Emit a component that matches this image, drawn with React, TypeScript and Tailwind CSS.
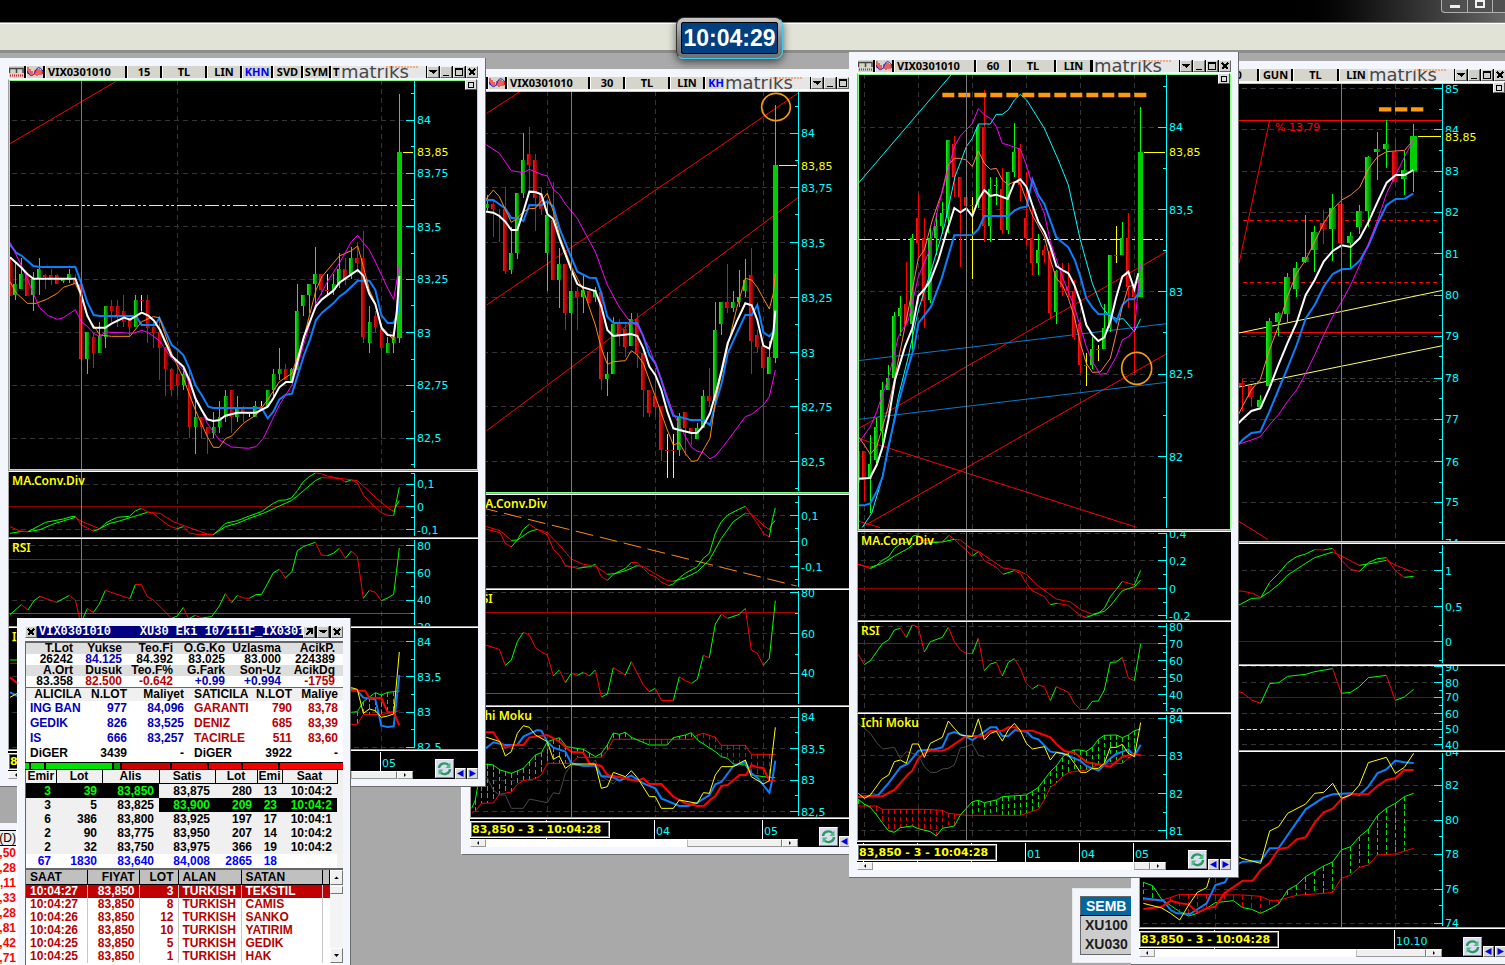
import type { ReactNode } from "react";

type Pt = [number, number];

interface CloudData {
  a: string;
  b: string;
  step: number;
  from: number;
  to: number;
}

interface PaneData {
  h: number;
  // page position of the plot origin, plot units are thirds of a pixel
  at: Pt;
  title?: string;
  labels: [string, number][];
  price?: number;
  priceFrom?: number;
  guides?: [number, string, string?][];
  segments?: [string, string, string?][];
  candles?: string;
  candleWidth?: number;
  trends?: string[];
  cloud?: CloudData;
  lines?: [string, string, number][];
  extra?: ReactNode;
}

interface ChartData {
  left: number;
  top: number;
  axis: number;
  cursor: number;
  vlines: number[];
  panes: PaneData[];
}

const GREEN = "#00ff00";
const RED = "#ff0000";
const BLUE = "#0a80ff";
const ORANGE = "#ff8a10";
const MAGENTA = "#ff00ff";
const CYAN = "#00ffff";
const YELLOW = "#ffff00";

const parse = (s: string): Pt[] =>
  s
    .trim()
    .split(/\s+/)
    .map((p) => p.split(",").map(Number) as Pt);

const yAt = (pts: Pt[], x: number) => {
  for (let i = 1; i < pts.length; i++) {
    const [x0, y0] = pts[i - 1];
    const [x1, y1] = pts[i];
    if (x >= x0 && x <= x1) return y0 + ((y1 - y0) * (x - x0)) / (x1 - x0 || 1);
  }
  return pts[pts.length - 1][1];
};

function Trend({ points }: { points: string }) {
  const pts = parse(points);
  return (
    <>
      {pts.slice(1).map(([x, y], i) => {
        const [px, py] = pts[i];
        return (
          <path
            key={i}
            d={`M${px} ${py}L${x} ${y}`}
            stroke={y < py ? GREEN : RED}
            strokeWidth={3}
          />
        );
      })}
    </>
  );
}

function Cloud({ a, b, step, from, to }: CloudData) {
  const pa = parse(a);
  const pb = parse(b);
  const bars = [];
  for (let x = from; x <= to; x += step) {
    const ya = yAt(pa, x);
    const yb = yAt(pb, x);
    bars.push(
      <path
        key={x}
        d={`M${x} ${Math.min(ya, yb)}V${Math.max(ya, yb)}`}
        stroke={ya < yb ? "#00dd00" : "#e00000"}
        strokeWidth={3}
        strokeDasharray="14 8"
      />
    );
  }
  return (
    <>
      <g shapeRendering="crispEdges">{bars}</g>
      <polyline points={b} stroke={RED} strokeWidth={3} />
      <polyline points={a} stroke={GREEN} strokeWidth={3} />
    </>
  );
}

function Candles({ data, width }: { data: string; width: number }) {
  return (
    <g shapeRendering="crispEdges">
      {data
        .trim()
        .split(/\s+/)
        .map((row, i) => {
          const [xs, hs, ts, bs, ls, kind] = row.split(",");
          const [x, hi, top, bottom, lo] = [xs, hs, ts, bs, ls].map(Number);
          const wick = kind === "y" ? YELLOW : kind === "r" ? RED : GREEN;
          const fill =
            kind === "G" ? "#00d000" : kind === "g" ? "url(#up)" : "url(#down)";
          const w = kind === "G" ? width + 2 : width;
          return (
            <g key={i}>
              <rect x={x - 1} y={hi} width={3} height={Math.max(lo - hi, 3)} fill={wick} />
              <rect
                x={x - w / 2}
                y={top}
                width={w}
                height={Math.max(bottom - top, 3)}
                fill={fill}
              />
            </g>
          );
        })}
    </g>
  );
}

function Pane({
  chart,
  pane,
  y,
  main,
}: {
  chart: ChartData;
  pane: PaneData;
  y: number;
  main: boolean;
}) {
  const { left } = chart;
  const [ox, oy] = pane.at;
  // panes of one chart may be measured from different origins
  const dx = (chart.panes[0].at[0] - ox) * 3;
  const axis = chart.axis + dx;
  const cursor = chart.cursor + dx;
  const ys = pane.labels.map((l) => l[1]);
  const step = ys[1] - ys[0];
  const minor = [ys[0] - step / 2, ...ys.map((v) => v + step / 2)];
  const labelX = ox + Math.floor(axis / 3) + 3;
  const py = (v: number) => Math.round(oy + v / 3) + 4;
  const x0 = (left - ox) * 3;
  const y0 = (y - oy) * 3;
  return (
    <div className="border-t border-b border-l border-t-white border-b-[#a0a0a0] border-l-[#a0a0a0] bg-black">
      <svg
        className="block w-full"
        height={pane.h}
        viewBox={`${left} ${y} 640 ${pane.h}`}
        preserveAspectRatio="xMinYMin slice"
      >
        <g transform={`translate(${ox} ${oy}) scale(0.333333)`} fill="none">
          <g stroke="#343434" strokeWidth={3} strokeDasharray="15 12" shapeRendering="crispEdges">
            {ys.map((v) => (
              <path key={v} d={`M${x0 + 9} ${v}H${axis - 28}`} />
            ))}
            {chart.vlines.map((v) => (
              <path key={v} d={`M${v + dx} ${y0}V${y0 + pane.h * 3}`} />
            ))}
          </g>
          {pane.guides?.map(([v, color, dash], i) => (
            <path
              key={i}
              d={`M${x0} ${v}H${axis}`}
              stroke={color}
              strokeWidth={3}
              strokeDasharray={dash}
              shapeRendering="crispEdges"
            />
          ))}
          {pane.segments?.map(([points, color, dash], i) => (
            <polyline
              key={i}
              points={points}
              stroke={color}
              strokeWidth={3}
              strokeDasharray={dash}
            />
          ))}
          {pane.candles && <Candles data={pane.candles} width={pane.candleWidth ?? 12} />}
          {pane.cloud && <Cloud {...pane.cloud} />}
          {pane.trends?.map((t, i) => <Trend key={i} points={t} />)}
          {pane.lines?.map(([points, color, w], i) => (
            <polyline key={i} points={points} stroke={color} strokeWidth={w} />
          ))}
          {pane.extra}
          <g stroke={CYAN} strokeWidth={3} shapeRendering="crispEdges">
            <path d={`M${axis} ${y0 + 3}V${y0 + pane.h * 3 - 3}`} />
            {ys.map((v) => (
              <path key={v} d={`M${axis - 25} ${v}H${axis}`} />
            ))}
            {minor.map((v) => (
              <path key={v} d={`M${axis - 10} ${v}H${axis}`} />
            ))}
          </g>
          <path
            d={`M${cursor} ${y0}V${y0 + pane.h * 3}`}
            stroke="#7c7c7c"
            strokeWidth={3}
            shapeRendering="crispEdges"
          />
          {pane.price && (
            <path
              d={`M${pane.priceFrom} ${pane.price}H${axis - 4}`}
              stroke={YELLOW}
              strokeWidth={3}
              shapeRendering="crispEdges"
            />
          )}
        </g>
        <g fontFamily="DejaVu Sans, sans-serif" fontSize={11} fill={CYAN}>
          {pane.labels.map(([text, v]) => (
            <text key={text} x={labelX} y={py(v)}>
              {text}
            </text>
          ))}
          {pane.price && (
            <>
              <rect x={labelX - 1} y={py(pane.price) - 9} width={34} height={11} fill="#000" />
              <text x={labelX} y={py(pane.price)} fill={YELLOW}>
                83,85
              </text>
            </>
          )}
        </g>
        {pane.title && (
          <text
            x={left + 3}
            y={y + 13}
            fontFamily="Noto Sans, sans-serif"
            fontSize={12}
            fontWeight={600}
            fill={YELLOW}
          >
            {pane.title}
          </text>
        )}
      </svg>
      {main && <div className="h-px bg-[#80ff80]" />}
    </div>
  );
}

function Tool({ className, children }: { className: string; children: ReactNode }) {
  return (
    <button
      type="button"
      className={`h-3 shrink-0 overflow-hidden border-l border-r-2 border-l-white border-r-black bg-[#d6d5cb] text-[11px] leading-3 font-bold whitespace-nowrap ${className}`}
    >
      {children}
    </button>
  );
}

function CaptionButton({ label, d }: { label: string; d: string }) {
  return (
    <button
      type="button"
      aria-label={label}
      className="h-3 w-3 shrink-0 border border-t-[#f0f0f0] border-r-[#666] border-b-[#666] border-l-[#f0f0f0] bg-[#cfcfca]"
    >
      <svg viewBox="0 0 10 10" className="block h-full w-full" shapeRendering="crispEdges">
        <path d={d} stroke="#000" strokeWidth="1.6" fill="none" />
      </svg>
    </button>
  );
}

function Toolbar({ tools }: { tools: ReactNode }) {
  return (
    <div className="flex h-3 bg-black font-['Noto_Sans',sans-serif] text-black">
      <div className="flex min-w-0 flex-1 overflow-hidden">
        <Tool className="w-[18px]">
          <svg viewBox="0 0 15 12" className="block h-3 w-[15px]">
            <path d="M0.500 7V2.500H14V7M7.500 2.500V7" stroke="#444" strokeWidth="1.500" fill="none" />
            <path d="M1 9.500H14" stroke="#e02020" strokeWidth="2" strokeDasharray="1 1" />
          </svg>
        </Tool>
        <Tool className="w-[19px]">
          <svg viewBox="0 0 16 12" className="block h-3 w-4">
            <path
              d="M1 1V8M3 3V9M5 5V9M8 4V9M10 3V10M12 3V9M14 4V9M15.500 5V8"
              stroke="#f01818"
              strokeWidth="1.200"
            />
            <path d="M0 5C3 11 6 11 8 6S12 0 16 5" stroke="#1818d0" fill="none" />
          </svg>
        </Tool>
        {tools}
      </div>
      <div className="relative h-3 w-[86px] shrink-0 overflow-hidden bg-[#e6e6e6] pl-px font-['DejaVu_Sans',sans-serif] text-[18px] leading-[11px] text-[#484848]">
        matriks
        <svg viewBox="0 0 32 2" className="absolute top-0 right-2 h-[2px] w-8">
          <path d="M0 1H32" stroke="#ff7020" strokeWidth="1" strokeDasharray="2 1" />
        </svg>
      </div>
      <div className="flex gap-px bg-black pl-px">
        <CaptionButton label="Menu" d="M1 3.500H9M2 4.500H8M3.500 5.500H6.500M4.500 6.500H5.500" />
        <CaptionButton label="Minimize" d="M2 8.500H8" />
        <CaptionButton label="Maximize" d="M1.500 1.500H8.500V8.500H1.500ZM1.500 2.500H8.500" />
        <CaptionButton label="Close" d="M2 2L8 8M8 2L2 8" />
      </div>
    </div>
  );
}

function Footer({
  chart,
  dates,
  thumb,
}: {
  chart: ChartData;
  dates: [string, number][];
  thumb: string;
}) {
  const ox = chart.panes[0].at[0];
  const width = ox + Math.round(chart.axis / 3) - chart.left;
  return (
    <div className="flex h-[29px] border-t border-white bg-black">
      <div className="relative flex shrink-0 flex-col">
        <svg className="block" width={width} height={20} viewBox={`${chart.left} 0 ${width} 20`}>
          {dates.map(([text, x]) => {
            const px = ox + Math.floor(x / 3);
            return (
              <g key={x}>
                <path d={`M${px + 0.5} 1V20`} stroke="#fff" />
                <text x={px + 2} y={16} fontFamily="DejaVu Sans, sans-serif" fontSize={11} fill={CYAN}>
                  {text}
                </text>
              </g>
            );
          })}
        </svg>
        <div className="absolute top-[2px] left-0 flex h-[17px] w-[140px] items-center border border-white bg-black font-['DejaVu_Sans',sans-serif] text-[11px] leading-3 font-bold whitespace-nowrap text-[#ffff00] outline -outline-offset-2 outline-[#777]">
          <span className="pt-px pl-px">83,850 - 3 - 10:04:28</span>
        </div>
        <div className="flex h-2 bg-white">
          <button
            type="button"
            aria-label="Scroll left"
            className="w-4 border border-r-[#999] border-b-[#999] border-t-white border-l-white bg-[#f0f0f0]"
          >
            <svg viewBox="0 0 14 6" className="block h-full w-full">
              <path d="M8 1V5L6 3Z" />
            </svg>
          </button>
          <div className="flex-1" />
          <div className={`border border-t-white border-r-[#777] border-b-[#999] border-l-[#bbb] bg-[#f0f0f0] ${thumb}`} />
          <button
            type="button"
            aria-label="Scroll right"
            className="w-4 border border-r-[#999] border-b-[#999] border-t-white border-l-white bg-[#f0f0f0]"
          >
            <svg viewBox="0 0 14 6" className="block h-full w-full">
              <path d="M6 1V5L8 3Z" />
            </svg>
          </button>
        </div>
      </div>
      <div className="flex flex-1 items-end justify-end gap-px">
        <button
          type="button"
          aria-label="Refresh"
          className="mb-px h-[19px] w-[19px] border border-t-white border-r-[#888] border-b-[#888] border-l-white bg-[#dcdcf4]"
        >
          <svg viewBox="0 0 17 17" className="block h-full w-full" fill="none">
            <path d="M3 8A5.500 5 0 0 1 12.500 5" stroke="#2c9a5c" strokeWidth="2.400" />
            <path d="M14 9A5.500 5 0 0 1 4.500 12.500" stroke="#2c9a5c" strokeWidth="2.400" />
            <path d="M14.500 2.500V8H9.500Z" fill="#48c078" />
            <path d="M2.500 15V9.500H7.500Z" fill="#48c078" />
          </svg>
        </button>
        <button type="button" aria-label="Previous" className="h-[11px] w-[11px] border border-t-white border-r-[#777] border-b-[#777] border-l-white bg-[#d8d8d8]">
          <svg viewBox="0 0 9 9" className="block h-full w-full">
            <path d="M7.500 1V8L1 4.500Z" fill="#0000e0" />
          </svg>
        </button>
        <button type="button" aria-label="Next" className="h-[11px] w-[11px] border border-t-white border-r-[#777] border-b-[#777] border-l-white bg-[#d8d8d8]">
          <svg viewBox="0 0 9 9" className="block h-full w-full">
            <path d="M1.500 1V8L8 4.500Z" fill="#0000e0" />
          </svg>
        </button>
      </div>
    </div>
  );
}

function ChartWindow({
  className,
  chart,
  tools,
  dates,
  thumb,
}: {
  className: string;
  chart: ChartData;
  tools: ReactNode;
  dates: [string, number][];
  thumb: string;
}) {
  let y = chart.top;
  return (
    <section
      className={`absolute border-r border-b border-[#6c6c6c] bg-[#f3f6fc] p-2 pr-[7px] pb-[7px] ${className}`}
    >
      <Toolbar tools={tools} />
      <div className="relative mt-px">
        {chart.panes.map((pane, i) => {
          const top = y;
          y += pane.h + 2;
          const main = i === 0;
          return (
            <div key={i} className={main ? "relative" : undefined}>
              <Pane
                chart={chart}
                pane={main ? { ...pane, h: pane.h - 1 } : pane}
                y={top}
                main={main}
              />
              {main && (
                <div className="pointer-events-none absolute top-px right-0 bottom-px left-px border border-[#80ff80]" />
              )}
            </div>
          );
        })}
        <button
          type="button"
          aria-label="Expand pane"
          className="absolute top-0 right-px flex h-[11px] w-3 items-center justify-center border border-t-white border-r-[#555] border-b-[#555] border-l-white bg-[#dcdcdc]"
        >
          <span className="h-[6px] w-[6px] border border-black" />
        </button>
      </div>
      <Footer chart={chart} dates={dates} thumb={thumb} />
    </section>
  );
}

const chart15: ChartData = {
  left: 9,
  top: 80,
  axis: 1243,
  cursor: 244,
  vlines: [532, 1144],
  panes: [
    {
      h: 390,
      at: [0, 50],
      labels: [
        ["84", 211], ["83,75", 370], ["83,5", 530], ["83,25", 688],
        ["83", 848], ["82,75", 1006], ["82,5", 1165],
      ],
      price: 307,
      priceFrom: 1210,
      guides: [[466, YELLOW, "42 8 9 8 9 8"]],
      segments: [["30,281 350,93", RED]],
      candles: `32,620,640,737,737,r 46,640,703,735,750,g 64,625,672,718,718,g 82,668,672,737,737,r
        100,665,688,735,782,g 118,625,657,688,735,g 136,672,674,680,718,r 154,657,674,686,705,r
        172,672,674,703,703,r 190,686,688,692,700,g 208,657,672,683,700,g 226,672,690,703,703,r
        244,690,703,927,955,r 262,846,846,927,971,g 281,848,860,910,955,r 299,815,857,908,908,g
        317,768,768,860,893,g 335,750,768,783,815,r 353,750,768,798,830,r 371,735,783,815,830,r
        389,805,810,830,857,r 407,735,750,830,830,g 425,735,750,753,783,y 443,735,750,833,878,r
        461,815,830,848,893,r 479,800,846,895,990,r 497,890,895,958,1038,r 515,955,958,1021,1038,r
        533,905,972,1006,1038,r 551,955,972,1006,1020,g 569,958,985,1131,1163,r 587,1050,1101,1131,1212,g
        605,1100,1101,1131,1163,r 623,1131,1131,1152,1212,r 641,1087,1131,1148,1163,g 659,1053,1101,1131,1148,g
        677,1020,1038,1101,1116,g 695,1020,1020,1101,1148,r 712,1038,1070,1101,1116,g 730,1068,1070,1085,1116,r
        748,1085,1090,1093,1101,y 766,1053,1068,1100,1100,g 785,1053,1068,1071,1080,y 803,1020,1020,1068,1068,g
        821,958,972,1020,1038,g 839,894,958,972,990,g 857,942,958,990,990,r 875,955,958,995,995,g
        892,702,783,960,960,g 910,735,735,768,797,g 928,702,702,735,790,g 946,591,672,702,765,g
        964,672,672,720,735,r 982,672,720,723,735,y 1001,672,702,720,735,g 1018,610,657,702,715,g
        1036,625,657,688,705,r 1054,590,625,672,688,g 1072,575,625,640,670,r 1090,543,625,862,880,r
        1109,768,815,878,908,g 1127,783,797,832,845,r 1145,830,838,895,1163,r 1163,862,878,908,908,g
        1181,848,862,878,908,g 1199,132,307,863,880,G`,
      lines: [
        ["30,583 48,608 66,618 100,648 120,651 226,651 244,700 262,757 281,795 300,798 408,798 425,825 466,825 478,803 497,845 515,885 532,898 550,915 568,955 586,1005 605,1035 625,1070 640,1074 785,1074 803,1105 820,1085 838,1048 858,1034 876,1031 912,915 930,868 948,810 966,788 1000,760 1018,740 1035,728 1073,692 1108,692 1126,720 1144,795 1163,819 1181,819 1193,790 1198,740", BLUE, 6],
        ["30,695 48,728 82,760 108,760 140,748 172,730 190,712 226,700 244,740 262,800 300,855 335,859 390,859 425,815 460,800 478,803 515,910 550,985 586,1080 622,1160 640,1192 658,1192 676,1166 695,1158 730,1120 768,1095 803,1050 838,995 876,970 912,860 948,720 966,680 1018,618 1054,602 1073,588 1090,650 1108,720 1126,760 1145,830 1163,850 1181,870 1198,690", ORANGE, 3],
        ["30,577 66,650 100,730 118,772 145,797 172,808 190,803 226,779 244,815 262,829 281,850 300,860 316,846 400,850 425,841 445,848 478,872 515,925 550,960 586,1040 622,1120 658,1170 695,1191 745,1195 768,1190 790,1165 838,1065 876,1005 912,880 948,760 985,690 1018,640 1054,575 1073,556 1090,578 1108,600 1126,635 1163,715 1181,748 1198,645", MAGENTA, 3],
        ["30,622 50,640 66,655 82,672 100,686 226,686 244,735 262,797 281,833 316,833 336,820 372,803 390,809 425,788 445,797 462,812 480,840 500,885 515,918 550,950 568,990 586,1045 605,1080 622,1108 640,1113 658,1110 676,1097 712,1088 768,1088 803,1070 820,1045 838,1012 858,996 876,996 912,860 948,768 966,748 1000,722 1018,698 1054,673 1073,660 1090,677 1108,732 1126,763 1145,835 1163,855 1181,857 1190,790 1198,678", "#fff", 6],
      ],
    },
    {
      h: 65,
      at: [0, 460],
      title: "MA.Conv.Div",
      labels: [["0,1", 73], ["0", 140], ["-0,1", 209]],
      guides: [[140, "#900000"]],
      trends: [
        "30,220 66,214 84,215 118,197 136,187 190,177 214,170 226,169 244,195 280,213 298,208 316,190 334,180 352,172 388,169 406,153 424,145 442,155 460,160 478,175 496,190 514,200 532,206 550,200 568,219 590,223 640,224 658,208 676,190 712,182 748,168 784,155 820,130 838,121 856,120 874,114 892,92 910,65 928,50 946,39 964,41 982,48 1018,55 1036,66 1054,60 1072,68 1090,105 1108,125 1126,142 1144,158 1163,166 1181,167 1190,120 1198,82",
        "30,200 60,213 84,215 120,209 160,192 226,172 244,184 262,191 298,206 330,190 352,185 400,170 442,157 480,160 520,185 560,200 622,222 640,223 676,200 712,190 748,175 790,160 838,138 874,122 892,108 946,62 964,53 1000,54 1036,57 1072,62 1090,78 1126,112 1163,143 1181,154 1190,135 1198,122",
      ],
    },
    {
      h: 87,
      at: [0, 460],
      title: "RSI",
      labels: [["80", 257], ["60", 338], ["40", 421], ["20", 502]],
      guides: [[298, "#b00000"], [460, "#009000"]],
      trends: [
        "30,464 64,434 84,450 102,422 120,409 170,427 208,406 226,420 240,480 247,480 262,445 280,458 298,432 316,391 390,416 406,373 424,374 442,410 460,420 515,475 532,468 550,442 566,476 586,466 605,474 635,470 658,438 676,401 695,428 712,406 730,414 748,415 768,404 785,403 803,370 820,338 838,328 856,354 876,335 892,272 912,259 946,247 964,285 982,287 1000,280 1018,265 1036,295 1054,273 1072,290 1090,415 1108,391 1126,397 1144,422 1163,414 1181,403 1198,264",
      ],
    },
    {
      h: 121,
      at: [0, 460],
      title: "Ichi Moku",
      labels: [["84", 545], ["83,5", 650], ["83", 757], ["82,5", 862]],
      cloud: {
        a: "30,600 52,600 1054,757 1072,755 1090,725 1126,698 1144,705 1163,697 1198,693",
        b: "30,610 52,610 1054,793 1072,793 1090,763 1145,764 1181,757 1198,752",
        step: 18,
        from: 1072,
        to: 1185,
      },
      lines: [
        ["30,697 52,708 1054,688 1072,692 1090,713 1126,718 1144,797 1163,801 1181,799 1198,645", BLUE, 6],
        ["30,652 52,670 1054,692 1095,692 1108,713 1144,714 1163,757 1181,757 1198,796", RED, 6],
        ["30,712 52,700 1054,683 1072,688 1090,760 1108,747 1126,752 1144,772 1163,768 1181,762 1198,576", YELLOW, 3],
      ],
    },
  ],
};

const chart30: ChartData = {
  left: 471,
  top: 91,
  axis: 1016,
  cursor: 334,
  vlines: [262, 586, 910],
  panes: [
    {
      h: 402,
      at: [460, 60],
      labels: [
        ["84", 220], ["83,75", 383], ["83,5", 548], ["83,25", 713],
        ["83", 878], ["82,75", 1040], ["82,5", 1205],
      ],
      price: 317,
      priceFrom: 957,
      segments: [
        ["80,160 178,96", RED],
        ["80,735 1016,98", RED],
        ["80,1112 1016,411", RED],
      ],
      candles: `82,405,433,445,455,g 100,418,432,447,530,r 118,448,465,468,545,r 136,382,448,632,643,r
        154,500,580,630,643,g 172,398,400,579,597,g 190,219,300,400,415,g 208,200,282,316,395,r
        226,282,300,415,512,r 244,382,403,447,465,r 262,430,465,578,693,g 280,366,480,661,661,r
        298,565,612,659,743,g 316,612,612,760,810,r 334,693,693,759,759,g 352,680,693,712,810,r
        370,645,690,712,759,g 388,690,693,728,728,r 406,680,690,710,725,g 424,693,695,957,990,r
        442,877,942,957,1008,g 460,770,792,941,941,g 478,777,792,825,857,r 496,790,808,860,890,r
        514,760,777,857,857,g 532,760,777,878,923,r 550,870,878,990,1070,r 568,990,990,1058,1070,r
        586,925,1008,1040,1070,r 604,1038,1038,1170,1203,r 622,1122,1170,1173,1253,y 640,1122,1170,1173,1253,y
        658,1058,1068,1170,1187,g 676,1056,1056,1105,1187,r 694,1104,1104,1122,1155,r 712,1090,1103,1137,1137,g
        730,990,1008,1103,1103,g 748,925,1008,1024,1040,r 766,726,810,1024,1024,g 784,726,726,792,825,g
        802,612,726,745,760,r 820,693,726,745,757,g 838,630,712,726,740,g 856,597,660,693,710,g
        874,564,645,844,941,r 892,810,825,860,877,r 910,857,859,925,1203,r 928,843,892,941,941,g
        946,135,316,893,908,G`,
      lines: [
        ["60,418 80,420 100,420 136,445 154,474 172,474 190,483 208,435 244,436 262,424 280,440 300,510 334,592 352,635 388,653 408,654 424,700 442,770 460,789 532,789 550,830 568,885 586,910 604,960 622,1020 640,1068 676,1075 690,1080 730,1080 750,1095 767,1030 785,970 803,880 830,820 856,765 875,765 892,735 910,817 928,829 940,815 946,792", BLUE, 6],
        ["60,440 80,415 100,390 118,410 154,487 172,475 190,455 208,446 226,445 262,400 280,455 300,530 334,620 370,690 406,795 424,865 442,913 460,905 496,902 514,872 532,885 550,910 586,1010 622,1110 640,1155 658,1148 676,1180 695,1204 712,1202 730,1170 750,1135 767,1020 803,860 830,745 856,655 875,660 892,682 910,715 928,747 940,700 946,640", ORANGE, 3],
        ["60,240 80,255 118,280 154,332 190,338 208,328 244,343 262,348 280,388 298,403 316,432 352,475 380,528 406,575 442,675 478,742 514,790 532,795 568,865 604,960 640,1060 676,1130 695,1162 712,1174 730,1178 750,1197 768,1186 803,1142 856,1070 875,1063 910,1035 928,1010 946,930", MAGENTA, 3],
        ["60,450 80,455 100,458 118,468 136,485 154,510 172,510 190,455 208,395 226,396 244,403 262,462 280,478 300,540 334,630 352,672 370,682 406,693 424,740 442,810 460,828 514,822 532,828 550,865 568,920 586,945 604,990 622,1055 640,1105 658,1110 695,1119 712,1118 730,1098 750,1060 770,990 785,930 803,850 830,785 856,730 875,736 892,780 910,857 928,866 940,820 946,752", "#fff", 6],
      ],
      extra: <ellipse cx={948} cy={141} rx={43} ry={41} stroke="#f59a10" strokeWidth={5} />,
    },
    {
      h: 93,
      at: [460, 480],
      title: "MA.Conv.Div",
      labels: [["0,1", 107], ["0", 185], ["-0,1", 261]],
      guides: [[184, "#900000"]],
      segments: [["60,82 1010,318", ORANGE, "54 20"]],
      trends: [
        "60,143 80,148 120,158 136,190 154,201 172,180 190,148 208,133 226,145 262,165 280,208 298,225 316,256 352,265 388,260 406,253 424,290 442,301 460,283 496,265 514,247 532,248 550,265 568,283 586,290 604,306 626,317 640,312 660,292 676,280 712,260 730,235 748,220 766,160 784,125 803,105 838,87 856,79 874,105 892,130 910,160 928,171 937,120 946,84",
        "60,136 80,140 120,152 154,181 172,180 208,155 232,148 262,158 298,195 334,237 370,253 406,258 442,283 464,281 500,271 532,256 550,260 586,282 622,302 640,304 676,293 712,275 748,240 784,175 820,125 856,100 874,102 910,136 928,149 937,130 946,122",
      ],
    },
    {
      h: 115,
      at: [460, 480],
      title: "RSI",
      labels: [["80", 338], ["60", 461], ["40", 580]],
      guides: [[397, "#b00000"], [640, "#009000"]],
      trends: [
        "60,492 80,496 118,508 136,556 154,540 172,485 190,457 208,465 226,502 244,516 262,525 280,588 298,570 316,608 334,580 352,586 370,577 388,588 406,570 424,651 442,642 460,563 496,585 514,545 550,615 568,635 586,625 604,661 640,662 658,590 676,602 695,610 712,598 730,526 748,533 766,432 784,403 803,415 838,403 856,385 874,510 892,520 910,556 928,535 946,362",
      ],
    },
    {
      h: 110,
      at: [460, 480],
      title: "Ichi Moku",
      labels: [["84", 712], ["83,5", 806], ["83", 901], ["82,5", 995]],
      cloud: {
        a: "35,985 46,960 60,880 80,852 100,855 120,870 154,880 190,865 226,825 244,818 262,785 298,773 320,800 370,808 406,830 424,820 442,795 460,759 478,763 496,757 514,772 568,795 622,795 640,773 676,765 694,758 712,780 766,815 784,830 803,835 820,852 856,855 874,885 910,890 946,893",
        b: "35,997 46,994 64,970 100,969 118,943 154,936 172,913 190,902 226,896 244,885 262,850 334,850 352,832 424,832 442,812 460,778 695,778 712,765 730,760 766,772 784,796 856,796 874,823 946,823",
        step: 18,
        from: 46,
        to: 930,
      },
      lines: [
        ["80,890 100,930 118,945 136,945 154,985 190,985 208,957 262,968 280,938 298,942 316,880 334,855 388,860 406,840 424,888 460,912 478,890", "#484848", 3],
        ["60,810 80,803 100,787 136,795 172,795 190,770 232,750 244,752 262,785 280,803 316,815 334,850 370,857 406,857 424,888 460,892 478,902 514,887 550,910 586,925 604,955 658,978 684,978 712,968 748,945 766,913 784,906 820,858 856,846 874,880 892,893 928,938 937,900 946,842", BLUE, 6],
        ["60,757 100,757 118,785 136,803 160,795 190,795 208,772 262,765 298,785 334,815 370,818 388,850 424,858 442,885 480,892 532,903 550,895 568,912 604,912 640,950 676,970 712,978 732,977 750,960 766,948 784,918 803,915 838,885 858,885 874,855 892,862 910,864 928,902 946,902", RED, 6],
        ["60,768 80,772 120,785 136,828 154,815 172,760 190,737 208,742 226,765 262,785 280,838 298,828 316,865 334,852 406,852 424,925 442,920 460,877 496,890 514,872 532,893 568,950 586,950 604,985 640,985 658,960 712,970 730,938 748,940 766,885 784,860 820,860 856,840 874,890 910,912 928,902 937,820 946,742", YELLOW, 3],
      ],
    },
  ],
};

const chart60: ChartData = {
  left: 858,
  top: 74,
  axis: 965,
  cursor: 364,
  vlines: [58, 220, 382, 544, 706, 868],
  panes: [
    {
      h: 456,
      at: [845, 50],
      labels: [["84", 232], ["83,5", 479], ["83", 725], ["82,5", 973], ["82", 1220]],
      price: 307,
      priceFrom: 897,
      guides: [[568, YELLOW, "42 8 9 8 9 8"]],
      segments: [
        ["40,400 318,75", CYAN],
        ["40,1136 965,605", RED],
        ["50,1432 965,911", RED],
        ["40,1165 875,1432", RED],
        ["40,1413 105,1433", RED],
        ["40,932 965,821", "#0a7ac8"],
        ["40,1108 965,997", "#0a7ac8"],
      ],
      candles: `40,1203,1204,1300,1300,g 58,1204,1204,1290,1352,r 76,1155,1243,1288,1388,g 94,1104,1130,1230,1240,g
        112,995,1020,1142,1200,g 130,945,984,1020,1020,g 148,785,797,985,985,g 166,738,773,797,857,g
        184,637,762,825,825,r 202,552,565,822,900,g 220,430,504,578,620,r 238,504,565,752,833,r
        256,535,565,750,760,g 274,490,528,563,615,g 292,455,490,528,552,g 310,270,270,505,550,g
        328,258,282,382,440,r 346,382,382,442,650,r 364,440,442,467,467,r 382,440,465,468,687,y
        400,224,232,460,475,g 418,120,232,528,575,r 436,380,416,528,575,g 454,380,405,408,465,g
        472,355,416,541,552,r 490,367,367,541,552,g 508,219,307,366,382,g 526,282,294,404,452,r
        544,365,504,565,585,r 562,470,565,640,675,r 580,552,600,638,675,g 598,585,600,615,640,r
        616,600,602,788,805,r 634,660,663,786,822,g 652,640,663,710,738,r 670,640,710,724,740,r
        688,690,724,862,870,r 706,815,822,946,970,r 724,910,945,948,1007,y 742,860,898,945,957,g
        760,885,897,900,932,y 778,762,835,897,897,g 796,616,616,835,845,g 814,528,614,617,640,y
        832,516,565,615,615,g 850,490,565,712,773,r 868,708,712,740,973,r 886,170,307,741,741,G`,
      lines: [
        ["52,1432 80,1390 110,1290 136,1170 160,1040 190,920 220,780 262,650 300,520 330,380 364,290 382,265 400,222 436,222 454,193 472,193 490,180 508,150 526,133 545,150 598,235 640,330 670,405 706,570 742,700 770,770 790,795 820,808 835,806 868,845 887,806", CYAN, 3],
        ["40,1366 58,1366 76,1360 95,1325 113,1280 130,1190 160,1060 190,950 208,890 220,820 258,770 290,685 328,556 382,555 400,538 418,498 490,498 508,482 526,473 545,470 562,388 580,435 598,462 616,512 634,562 670,592 690,632 706,680 724,745 742,772 760,792 796,793 814,816 832,765 850,748 868,748 887,720", BLUE, 6],
        ["40,1160 58,1185 76,1213 95,1190 113,1130 130,1070 150,980 190,780 220,625 238,600 262,510 290,430 310,345 328,325 346,325 364,330 382,350 400,303 418,340 436,358 454,355 472,390 490,404 508,395 526,400 544,450 562,495 598,560 616,630 634,685 652,705 670,745 688,800 706,880 724,940 742,967 766,966 796,925 814,850 832,770 850,710 868,705 887,688", "#ff7f50", 3],
        ["40,1180 76,1130 95,1085 130,985 160,860 190,810 220,680 250,610 280,470 328,290 346,258 382,220 400,176 418,195 436,205 454,230 472,280 490,285 526,298 544,345 562,405 598,490 616,575 652,680 688,770 706,830 724,890 742,935 766,973 785,970 814,920 832,870 850,860 868,840 887,640", MAGENTA, 3],
        ["40,1286 75,1284 95,1245 113,1190 130,1110 150,990 180,890 202,835 220,738 240,715 256,692 280,630 305,545 328,474 346,487 364,475 382,498 400,450 418,420 436,438 454,434 488,447 508,398 526,388 544,410 562,465 580,515 598,545 616,590 634,648 652,660 670,670 688,705 706,755 724,825 742,855 760,873 778,862 796,815 814,740 832,680 850,665 868,718 880,670", "#fff", 6],
      ],
      extra: (
        <>
          <path d="M292 135H906" stroke="#ff9a08" strokeWidth={13} strokeDasharray="36 12" />
          <ellipse cx={875} cy={955} rx={45} ry={48} stroke="#f59a10" strokeWidth={5} />
        </>
      ),
    },
    {
      h: 88,
      at: [845, 520],
      title: "MA.Conv.Div",
      labels: [["0,4", 41], ["0,2", 122], ["0", 207], ["-0,2", 287]],
      guides: [[205, "#900000"]],
      trends: [
        "40,133 76,146 95,136 113,120 131,110 148,85 166,72 190,65 204,48 220,45 238,70 292,66 312,46 328,58 346,75 382,108 400,95 418,122 454,142 474,163 508,152 526,160 544,190 562,212 598,230 616,254 636,250 670,256 688,272 706,286 724,292 742,286 760,280 778,265 796,230 814,208 832,184 868,195 887,151",
        "40,133 76,142 113,130 148,108 190,85 220,60 292,66 328,58 346,60 382,88 400,94 436,118 474,144 516,150 544,163 580,198 634,237 676,246 706,268 742,283 778,274 796,258 832,212 868,200 887,180",
      ],
    },
    {
      h: 90,
      at: [845, 520],
      title: "RSI",
      labels: [["80", 320], ["70", 371], ["60", 422], ["50", 473], ["40", 524], ["30", 577]],
      guides: [[371, "#b00000"]],
      trends: [
        "40,403 58,434 76,422 113,370 131,360 148,330 166,325 184,352 202,315 220,322 238,396 256,365 292,352 310,322 328,365 346,390 364,400 382,401 400,355 418,452 436,432 454,427 472,468 490,427 508,416 526,445 544,490 562,507 580,495 598,500 616,542 634,500 670,517 688,550 706,568 724,569 742,544 760,543 778,510 796,427 814,426 832,412 850,474 868,482 887,372",
      ],
    },
    {
      h: 126,
      at: [845, 520],
      title: "Ichi Moku",
      labels: [["84", 596], ["83", 707], ["82", 821], ["81", 932]],
      cloud: {
        a: "40,838 58,852 76,862 95,885 113,910 130,932 148,937 166,923 202,918 220,926 256,935 274,948 292,925 328,918 346,885 382,845 400,841 418,848 454,840 472,830 544,825 562,814 580,802 616,755 634,738 652,712 670,697 688,690 706,690 724,694 742,682 760,658 778,646 814,645 832,653 850,645 868,632 887,627",
        b: "40,858 95,858 113,868 240,868 292,871 310,880 364,886 526,886 544,880 580,868 598,840 616,802 634,790 652,770 670,758 688,755 724,750 760,733 832,730 850,715 868,700",
        step: 18,
        from: 40,
        to: 868,
      },
      lines: [
        ["40,610 76,640 95,668 113,687 148,682 166,715 184,695 220,705 238,740 256,757 274,757 292,747 310,745 328,735 346,684 364,680 382,672 400,705 418,710", "#484848", 3],
        ["40,832 100,825 130,790 166,742 190,730 220,692 270,688 292,682 310,642 328,636 364,650 382,660 400,648 436,622 454,622 472,648 490,648 510,630 545,635 562,652 580,658 616,695 652,700 688,715 706,722 724,738 760,752 778,735 796,715 814,702 850,688 868,708 887,674", BLUE, 6],
        ["40,830 113,828 148,810 190,762 202,752 220,715 244,695 256,692 292,692 310,685 364,648 418,648 436,633 472,632 490,622 510,622 526,632 562,632 598,645 616,652 634,672 658,693 688,698 706,712 724,726 742,730 796,740 832,710 868,702 887,706", RED, 6],
        ["40,820 58,835 76,825 110,778 131,765 148,725 166,720 184,730 202,672 220,672 238,712 256,670 292,652 310,603 328,625 346,645 382,650 400,597 418,660 436,640 454,634 472,663 490,630 508,610 526,632 544,670 562,687 598,680 616,720 634,697 670,705 688,730 706,757 724,757 742,745 760,745 778,730 796,682 814,682 832,673 850,700 868,710 887,608", YELLOW, 3],
      ],
    },
  ],
};

const chartDay: ChartData = {
  left: 1140,
  top: 83,
  axis: 638,
  cursor: 334,
  vlines: [-44, 497],
  panes: [
    {
      h: 459,
      at: [1230, 60],
      labels: [
        ["85", 86], ["84", 210], ["83", 334], ["82", 457], ["81", 582], ["80", 706],
        ["79", 829], ["78", 955], ["77", 1078], ["76", 1205], ["75", 1327], ["74", 1450],
      ],
      price: 230,
      priceFrom: 564,
      guides: [
        [181, RED],
        [817, RED],
        [482, RED, "12 10"],
        [667, RED, "12 10"],
        [964, RED, "12 10"],
      ],
      segments: [
        ["27,610 119,181", RED],
        ["27,1384 113,1438", RED],
        ["27,819 638,691", "#ffff70"],
        ["27,981 638,857", "#ffff70"],
      ],
      candleWidth: 19,
      candles: `37,957,970,978,1052,r 64,975,978,1010,1040,r 91,1005,1020,1041,1041,g 118,774,783,978,978,g
        145,755,760,786,828,g 172,639,652,762,788,g 199,606,625,687,711,g 227,465,592,606,610,g
        254,498,516,570,635,g 281,450,490,507,552,r 308,402,445,507,603,g 333,430,432,548,548,r
        361,516,528,549,623,g 388,435,453,501,522,g 415,288,291,453,500,g 442,216,267,276,360,g
        469,180,252,267,324,g 496,237,275,367,367,r 523,273,330,357,405,g 550,192,228,332,396,G`,
      lines: [
        ["20,1160 37,1140 64,1119 91,1115 118,1055 145,990 172,925 200,855 227,775 254,735 281,680 308,642 335,628 362,626 389,602 416,555 443,490 470,435 497,417 524,416 550,401", BLUE, 6],
        ["20,1075 37,1040 64,990 91,958 118,870 145,800 172,710 200,640 227,600 254,545 281,490 308,448 335,420 362,405 389,382 416,325 443,290 470,275 497,273 524,271 550,240", "#ff7f50", 3],
        ["20,1155 64,1140 91,1130 118,1095 145,1065 172,1025 200,990 227,940 254,885 281,825 308,770 335,725 362,675 389,615 416,550 443,480 470,400 497,345 524,290 550,240", MAGENTA, 3],
        ["20,1095 37,1078 64,1053 91,1045 118,985 145,915 172,850 200,788 227,705 254,660 281,605 308,573 335,556 362,561 389,535 416,485 443,425 470,368 497,345 524,345 550,330", "#fff", 6],
      ],
      extra: (
        <>
          <path d="M447 148H582" stroke="#ff9a08" strokeWidth={13} strokeDasharray="37 11" />
          <text x={135} y={214} fontFamily="DejaVu Sans, sans-serif" fontSize={33} fill={RED}>
            % 13,79
          </text>
        </>
      ),
    },
    {
      h: 120,
      at: [1060, 530],
      labels: [["1", 122], ["0,5", 231], ["0", 336]],
      guides: [[334, "#900000"]],
      trends: [
        "510,240 537,225 575,205 602,204 629,157 656,130 683,98 710,80 737,72 764,59 791,60 818,55 844,90 872,118 898,124 925,98 952,86 979,83 1006,122 1033,142 1061,139",
        "510,180 550,184 578,190 602,202 629,185 656,163 683,135 737,100 764,83 818,66 844,78 898,106 925,102 979,91 1006,105 1061,127",
      ],
    },
    {
      h: 84,
      at: [1060, 530],
      labels: [["90", 410], ["80", 458], ["70", 502], ["60", 551], ["50", 598], ["40", 644]],
      guides: [[502, "#900000"], [598, YELLOW, "12 8"]],
      trends: [
        "510,480 548,488 575,510 602,520 629,461 656,458 683,439 737,433 764,425 818,416 844,490 872,487 898,470 925,443 979,436 1006,511 1033,501 1061,478",
      ],
    },
    {
      h: 175,
      at: [1060, 530],
      labels: [["84", 666], ["82", 766], ["80", 871], ["78", 973], ["76", 1078], ["74", 1180]],
      cloud: {
        a: "250,1057 278,1067 305,1108 359,1145 386,1158 412,1150 440,1135 466,1118 520,1112 548,1133 575,1138 602,1150 629,1137 656,1122 683,1080 710,1065 737,1040 764,1024 791,1008 818,996 844,960 872,950 898,920 925,898 952,857 979,835 1006,820 1033,800 1061,790",
        b: "250,1110 305,1111 359,1093 548,1095 602,1099 629,1111 656,1111 683,1103 710,1096 791,1090 818,1087 844,1045 872,1035 898,1012 925,1005 952,975 1006,972 1061,955",
        step: 27,
        from: 250,
        to: 1040,
      },
      lines: [
        ["250,1105 310,1112 332,1140 350,1150 390,1152 440,1120 466,1065 495,1057 520,1010 548,995 602,993 629,955 656,954 683,915 737,838 791,802 818,793 872,790 898,795 925,770 952,730 979,718 1006,692 1033,697 1061,699", BLUE, 6],
        ["250,1137 305,1130 332,1112 359,1120 386,1123 412,1148 440,1135 466,1130 493,1090 548,1052 578,1052 602,1020 629,998 656,957 683,953 710,928 737,922 764,878 791,847 818,836 844,808 872,793 925,792 952,768 979,750 1006,745 1033,720 1061,720", RED, 6],
        ["250,1120 305,1134 332,1150 359,1170 386,1125 412,1087 440,1073 466,985 500,960 545,985 602,1000 629,903 656,890 683,850 737,822 764,790 791,787 818,760 844,805 872,795 898,765 925,698 952,690 979,682 1006,730 1033,712 1061,670", YELLOW, 3],
      ],
    },
  ],
};

const summary: [string, string, string][][] = [
  [
    ["T.Lot", "26242", "text-black"],
    ["Yukse", "84.125", "text-[#0000b8]"],
    ["Teo.Fi", "84.392", "text-black"],
    ["O.G.Ko", "83.025", "text-black"],
    ["Uzlasma", "83.000", "text-black"],
    ["AcikP.", "224389", "text-black"],
  ],
  [
    ["A.Ort", "83.358", "text-black"],
    ["Dusuk", "82.500", "text-[#b80000]"],
    ["Teo.F%", "-0.642", "text-[#b80000]"],
    ["G.Fark", "+0.99", "text-[#0000b8]"],
    ["Son-Uz", "+0.994", "text-[#0000b8]"],
    ["AcikDg", "-1759", "text-[#b80000]"],
  ],
];

const brokers = [
  ["ING BAN", "977", "84,096", "GARANTI", "790", "83,78"],
  ["GEDIK", "826", "83,525", "DENIZ", "685", "83,39"],
  ["IS", "666", "83,257", "TACIRLE", "511", "83,60"],
  ["DiGER", "3439", "-", "DiGER", "3922", "-"],
];

const depth = [
  ["3", "39", "83,850", "83,875", "280", "13", "10:04:2"],
  ["3", "5", "83,825", "83,900", "209", "23", "10:04:2"],
  ["6", "386", "83,800", "83,925", "197", "17", "10:04:1"],
  ["2", "90", "83,775", "83,950", "207", "14", "10:04:2"],
  ["2", "32", "83,750", "83,975", "366", "19", "10:04:2"],
  ["67", "1830", "83,640", "84,008", "2865", "18", ""],
];

const trades = [
  ["10:04:27", "83,850", "3", "TURKISH", "TEKSTIL"],
  ["10:04:27", "83,850", "8", "TURKISH", "CAMIS"],
  ["10:04:26", "83,850", "12", "TURKISH", "SANKO"],
  ["10:04:26", "83,850", "10", "TURKISH", "YATIRIM"],
  ["10:04:25", "83,850", "5", "TURKISH", "GEDIK"],
  ["10:04:25", "83,850", "1", "TURKISH", "HAK"],
];

function depthColor(row: number, col: number) {
  if (row === 5) return "bg-white text-[#0000ff]";
  if ((row === 0 && col < 3) || (row === 1 && col > 2)) return "bg-black text-[#00ff00]";
  return "";
}

function OrderBook() {
  return (
    <section className="absolute top-[618px] left-[17px] w-[334px] border-r border-l border-r-[#6c6c6c] border-l-white bg-[#f3f6fc] pt-2 pr-[7px] pl-[7px] font-['Liberation_Sans',sans-serif] text-[12px] font-bold text-black">
      <div className="flex h-3 bg-black">
        <CaptionButton label="Close" d="M2 2L8 8M8 2L2 8" />
        <div className="min-w-0 flex-1 overflow-hidden bg-[#000080] pl-[2px] font-['Liberation_Mono',monospace] leading-3 whitespace-pre text-white">
          {"VIX0301010    XU30 Eki 10/111F_IX0301010"}
        </div>
        <div className="flex gap-[2px]">
          <CaptionButton label="Detach" d="M2 8L8 2M3 2H8V7" />
          <CaptionButton label="Menu" d="M1 3.500H9M2 4.500H8M3.500 5.500H6.500" />
          <CaptionButton label="Close window" d="M2 2L8 8M8 2L2 8" />
        </div>
      </div>
      <div className="mt-[3px] border-t-2 border-l border-[#666] bg-white">
        <table className="w-full table-fixed border-collapse text-right leading-[11px]">
          <colgroup>
            <col className="w-[47px]" />
            <col className="w-[49px]" />
            <col className="w-[51px]" />
            <col className="w-[52px]" />
            <col className="w-[56px]" />
            <col className="w-[54px]" />
            <col />
          </colgroup>
          <tbody>
            {summary.map((group, i) => [
              <tr key={`h${i}`} className="h-[11px] bg-[#dedede]">
                {group.map(([name]) => (
                  <th key={name} scope="col" className="h-[11px] p-0">
                    {name}
                  </th>
                ))}
                <td className="p-0" />
              </tr>,
              <tr key={`v${i}`} className="h-[11px]">
                {group.map(([name, value, color]) => (
                  <td key={name} className={`h-[11px] p-0 ${color}`}>
                    {value}
                  </td>
                ))}
                <td className="p-0" />
              </tr>,
            ])}
          </tbody>
        </table>
      </div>
      <div className="h-[75px] border-t border-l border-[#666] bg-white">
        <table className="w-full table-fixed border-collapse leading-[15px]">
          <colgroup>
            <col className="w-[60px]" />
            <col className="w-[41px]" />
            <col className="w-[57px]" />
            <col className="w-[66px]" />
            <col className="w-[42px]" />
            <col className="w-[46px]" />
            <col />
          </colgroup>
          <thead>
            <tr className="bg-[#f0f0f0] text-right leading-[13px]">
              <th className="p-0 pl-1 text-center">ALICILA</th>
              <th className="p-0">N.LOT</th>
              <th className="p-0">Maliyet</th>
              <th className="p-0 pl-[10px] text-left">SATICILA</th>
              <th className="p-0">N.LOT</th>
              <th className="p-0">Maliye</th>
              <th className="p-0" />
            </tr>
          </thead>
          <tbody>
            {brokers.map((row, i) => (
              <tr key={row[0]} className="text-right">
                {row.map((cell, j) => (
                  <td
                    key={j}
                    className={`p-0 whitespace-nowrap ${j === 0 ? "pl-1 text-left" : ""} ${j === 3 ? "pl-[10px] text-left" : ""} ${i === 3 ? "text-black" : j < 3 ? "text-[#0000b8]" : "text-[#b80000]"}`}
                  >
                    {cell}
                  </td>
                ))}
              </tr>
            ))}
          </tbody>
        </table>
      </div>
      <div className="flex h-2 gap-[2px] border-y border-black bg-black">
        <div className="w-1 bg-[#00e000]" />
        <div className="w-[13px] bg-[#00e000]" />
        <div className="w-[66px] bg-[#00e000]" />
        <div className="w-[6px] bg-[#00a000]" />
        <div className="w-[48px] bg-[#c80000]" />
        <div className="w-[35px] bg-[#d80000]" />
        <div className="w-8 bg-[#e80000]" />
        <div className="w-[35px] bg-[#f00000]" />
        <div className="flex-1 bg-[#ff0000]" />
      </div>
      <div className="border-l border-[#666] bg-[#f0f0f0]">
        <table className="w-full table-fixed border-collapse leading-[14px]">
          <colgroup>
            <col className="w-[30px]" />
            <col className="w-[46px]" />
            <col className="w-[57px]" />
            <col className="w-[56px]" />
            <col className="w-[42px]" />
            <col className="w-[25px]" />
            <col className="w-[55px]" />
            <col />
          </colgroup>
          <thead>
            <tr>
              {["Emir", "Lot", "Alis", "Satis", "Lot", "Emi", "Saat"].map((name, i) => (
                <th key={i} className="border-r border-b border-black p-0 leading-[13px]">
                  {name}
                </th>
              ))}
              <th className="p-0" />
            </tr>
          </thead>
          <tbody>
            {depth.map((row, i) => (
              <tr key={i} className="h-[14px] text-right">
                {row.map((cell, j) => (
                  <td key={j} className={`p-0 pr-[5px] ${depthColor(i, j)}`}>
                    {cell}
                  </td>
                ))}
                <td className="p-0" />
              </tr>
            ))}
          </tbody>
        </table>
      </div>
      <div className="flex border-t-2 border-l border-[#666] bg-white">
        <table className="w-[304px] table-fixed border-collapse leading-[13px]">
          <colgroup>
            <col className="w-[61px]" />
            <col className="w-[52px]" />
            <col className="w-[39px]" />
            <col className="w-[63px]" />
            <col className="w-[81px]" />
            <col />
          </colgroup>
          <thead>
            <tr className="bg-[#c0c0c0]">
              {["SAAT", "FIYAT", "LOT", "ALAN", "SATAN", ""].map((name, i) => (
                <th
                  key={i}
                  className={`border-r border-b border-black px-1 py-0 leading-[14px] font-bold ${i === 1 || i === 2 ? "text-right" : "text-left"}`}
                >
                  {name}
                </th>
              ))}
            </tr>
          </thead>
          <tbody>
            {trades.map((row, i) => (
              <tr key={i} className={i === 0 ? "h-[13px] bg-[#c00000] text-white" : "h-[13px] text-[#b80000]"}>
                {row.map((cell, j) => (
                  <td
                    key={j}
                    className={`border-r border-[#c8c8c8] px-1 py-0 ${j === 1 || j === 2 ? "text-right" : "text-left"}`}
                  >
                    {cell}
                  </td>
                ))}
                <td className="p-0" />
              </tr>
            ))}
          </tbody>
        </table>
        <div className="flex flex-1 flex-col justify-between bg-[#f4f4f4]">
          <div>
            <button type="button" aria-label="Scroll up" className="flex h-[15px] w-full items-center justify-center border border-t-white border-r-[#777] border-b-[#777] border-l-white bg-[#f0f0f0]">
              <svg viewBox="0 0 6 4" className="w-[5px]">
                <path d="M0 4H6L3 0.500Z" />
              </svg>
            </button>
            <div className="mt-px h-2 border border-t-white border-r-[#777] border-b-[#777] border-l-white bg-[#f0f0f0]" />
          </div>
          <button type="button" aria-label="Scroll down" className="flex h-[15px] w-full items-center justify-center border border-t-white border-r-[#777] border-b-[#777] border-l-white bg-[#f0f0f0]">
            <svg viewBox="0 0 6 4" className="w-[5px]">
              <path d="M0 0H6L3 3.500Z" />
            </svg>
          </button>
        </div>
      </div>
      <div className="h-8 border-l border-[#666] bg-white" />
    </section>
  );
}

export default function App() {
  return (
    <main className="relative h-screen w-full overflow-hidden bg-[#a9a9a9] font-['Liberation_Sans',sans-serif]">
      <svg width="0" height="0" className="absolute">
        <defs>
          <linearGradient id="up">
            <stop offset="0" stopColor="#10f010" />
            <stop offset="1" stopColor="#006800" />
          </linearGradient>
          <linearGradient id="down">
            <stop offset="0" stopColor="#ff1010" />
            <stop offset="1" stopColor="#700000" />
          </linearGradient>
        </defs>
      </svg>

      <header>
        <div className="flex h-[23px] items-start justify-end border-b border-[#8a8a8a] bg-linear-to-r from-black from-85% to-[#686868]">
          <div className="flex h-[13px] w-16 overflow-hidden rounded-bl border-b border-l border-[#b0b0b0] bg-[#505050]">
            <button type="button" aria-label="Minimize" className="flex w-[26px] items-end justify-center border-r border-[#b0b0b0] pb-1">
              <span className="h-[3px] w-[10px] bg-[#f0f0f0]" />
            </button>
            <button type="button" aria-label="Restore" className="flex w-[25px] items-end justify-center border-r border-[#b0b0b0] pb-1">
              <span className="h-2 w-[10px] border-2 border-[#f0f0f0]" />
            </button>
          </div>
        </div>
        <div className="h-[30px] border-t border-b-3 border-t-white border-b-[#8c8c8c] bg-[#e2e3d7]" />
      </header>

      <ChartWindow
        className="top-[69px] left-[461px] w-[409px] border-l border-l-white"
        chart={chart30}
        thumb="w-[95px]"
        dates={[["", 262], ["04", 586], ["05", 910]]}
        tools={
          <>
            <Tool className="w-[83px] pl-[2px] text-left">VIX0301010</Tool>
            <Tool className="w-[35px]">30</Tool>
            <Tool className="w-[45px]">TL</Tool>
            <Tool className="w-[35px]">LIN</Tool>
            <Tool className="w-8 text-[#0000ff]">KHN</Tool>
          </>
        }
      />

      <section className="absolute top-[888px] left-[1072px] w-20 border border-[#e8e8e8] bg-[#f3f6fc] p-[7px]">
        <table className="w-full border border-[#666] bg-[#cdcdcd] text-[14px] leading-[18px] font-bold">
          <thead>
            <tr className="border-b border-black bg-[#0068a0] text-left text-white">
              <th className="p-0 pl-[5px]">SEMB</th>
            </tr>
          </thead>
          <tbody className="text-[#1c1c1c]">
            <tr>
              <td className="p-0 pl-1">XU100</td>
            </tr>
            <tr>
              <td className="p-0 pl-1 leading-5">XU030</td>
            </tr>
          </tbody>
        </table>
      </section>

      <ChartWindow
        className="top-[61px] left-[1131px] w-[383px]"
        chart={chartDay}
        thumb="w-[70px]"
        dates={[["", -44], ["10.10", 497]]}
        tools={
          <>
            <Tool className="w-[83px] pl-[2px] text-left">VIX0301010</Tool>
            <Tool className="w-[34px]">GUN</Tool>
            <Tool className="w-[46px]">TL</Tool>
            <Tool className="w-[35px]">LIN</Tool>
          </>
        }
      />

      <ChartWindow
        className="top-[58px] left-0 w-[486px]"
        chart={chart15}
        thumb="w-[46px]"
        dates={[["", 244], ["05", 1144]]}
        tools={
          <>
            <Tool className="w-[82px] pl-[2px] text-left">VIX0301010</Tool>
            <Tool className="w-[35px]">15</Tool>
            <Tool className="w-[45px]">TL</Tool>
            <Tool className="w-[35px]">LIN</Tool>
            <Tool className="w-[31px] text-[#0000ff]">KHN</Tool>
            <Tool className="w-[30px]">SVD</Tool>
            <Tool className="w-[28px]">SYM</Tool>
            <Tool className="w-[26px] pl-px text-left">TL</Tool>
          </>
        }
      />

      <ChartWindow
        className="top-[52px] left-[849px] w-[390px]"
        chart={chart60}
        thumb="w-4"
        dates={[["", 58], ["", 220], ["", 382], ["01", 544], ["04", 706], ["05", 868]]}
        tools={
          <>
            <Tool className="w-[82px] pl-[2px] text-left">VIX0301010</Tool>
            <Tool className="w-[35px]">60</Tool>
            <Tool className="w-[45px]">TL</Tool>
            <Tool className="w-[36px]">LIN</Tool>
          </>
        }
      />

      <section className="absolute top-[823px] left-0 w-[17px] overflow-hidden border-t-[7px] border-[#f3f6fc] bg-white text-[12px] leading-[15px] font-bold">
        <table className="float-right mr-px border-collapse text-right">
          <thead>
            <tr>
              <th scope="col" className="border-t border-b border-black bg-[#ececec] p-0 leading-[14px] font-normal">
                (D)
              </th>
            </tr>
          </thead>
          <tbody className="text-[#ff0000]">
            {["2,50", "2,28", "3,11", "4,33", "3,28", "2,81", "2,42", "0,71", "1,05"].map((v) => (
              <tr key={v}>
                <td className="p-0">{v}</td>
              </tr>
            ))}
          </tbody>
        </table>
      </section>

      <OrderBook />

      <div className="absolute top-[17px] left-[676px] h-[42px] w-[107px] rounded-lg border border-[#333] border-r-[#40c8f0] border-b-[#40c8f0] bg-linear-to-b from-[#c8c8c8] via-[#8c8c8c] to-[#707070] p-1 shadow-[0_3px_8px_rgba(0,0,0,0.6)]">
        <div className="flex h-full items-center justify-center rounded-xs border border-black bg-[#004080] text-[23px] font-bold text-white">
          <time>10:04:29</time>
        </div>
      </div>
    </main>
  );
}
